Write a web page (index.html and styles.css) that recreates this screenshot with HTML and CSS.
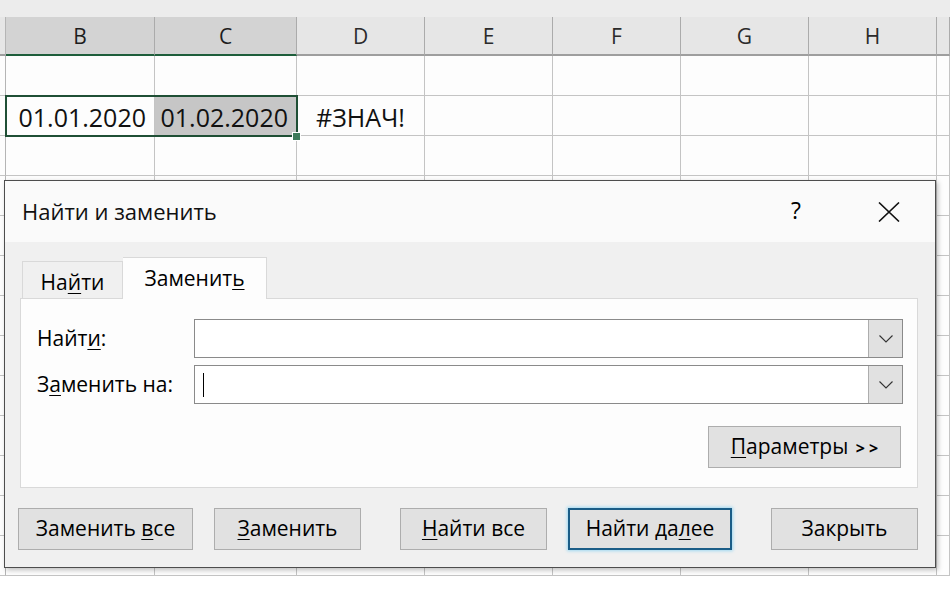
FILE: index.html
```html
<!DOCTYPE html>
<html lang="ru">
<head>
    <meta charset="UTF-8">
    <meta name="viewport" content="width=device-width, initial-scale=1.0">
    <title>Найти и заменить</title>
    <link rel="stylesheet" href="styles.css">
</head>
<body>

    <div class="sheet">
        <div class="top-strip"></div>
        <div class="grid">
            <div class="hdr stub"></div>
            <div class="hdr sel">B</div>
            <div class="hdr sel">C</div>
            <div class="hdr">D</div>
            <div class="hdr">E</div>
            <div class="hdr">F</div>
            <div class="hdr">G</div>
            <div class="hdr">H</div>
            <div class="hdr"></div>

            <div class="cell stub"></div><div class="cell"></div><div class="cell"></div><div class="cell"></div><div class="cell"></div><div class="cell"></div><div class="cell"></div><div class="cell"></div><div class="cell"></div>

            <div class="cell stub"></div>
            <div class="cell date">01.01.2020</div>
            <div class="cell date selected">01.02.2020</div>
            <div class="cell error">#ЗНАЧ!</div>
            <div class="cell"></div><div class="cell"></div><div class="cell"></div><div class="cell"></div><div class="cell"></div>

            <div class="cell stub"></div><div class="cell"></div><div class="cell"></div><div class="cell"></div><div class="cell"></div><div class="cell"></div><div class="cell"></div><div class="cell"></div><div class="cell"></div>
            <div class="cell stub"></div><div class="cell"></div><div class="cell"></div><div class="cell"></div><div class="cell"></div><div class="cell"></div><div class="cell"></div><div class="cell"></div><div class="cell"></div>
            <div class="cell stub"></div><div class="cell"></div><div class="cell"></div><div class="cell"></div><div class="cell"></div><div class="cell"></div><div class="cell"></div><div class="cell"></div><div class="cell"></div>
            <div class="cell stub"></div><div class="cell"></div><div class="cell"></div><div class="cell"></div><div class="cell"></div><div class="cell"></div><div class="cell"></div><div class="cell"></div><div class="cell"></div>
            <div class="cell stub"></div><div class="cell"></div><div class="cell"></div><div class="cell"></div><div class="cell"></div><div class="cell"></div><div class="cell"></div><div class="cell"></div><div class="cell"></div>
            <div class="cell stub"></div><div class="cell"></div><div class="cell"></div><div class="cell"></div><div class="cell"></div><div class="cell"></div><div class="cell"></div><div class="cell"></div><div class="cell"></div>
            <div class="cell stub"></div><div class="cell"></div><div class="cell"></div><div class="cell"></div><div class="cell"></div><div class="cell"></div><div class="cell"></div><div class="cell"></div><div class="cell"></div>
            <div class="cell stub"></div><div class="cell"></div><div class="cell"></div><div class="cell"></div><div class="cell"></div><div class="cell"></div><div class="cell"></div><div class="cell"></div><div class="cell"></div>
            <div class="cell stub"></div><div class="cell"></div><div class="cell"></div><div class="cell"></div><div class="cell"></div><div class="cell"></div><div class="cell"></div><div class="cell"></div><div class="cell"></div>
            <div class="cell stub"></div><div class="cell"></div><div class="cell"></div><div class="cell"></div><div class="cell"></div><div class="cell"></div><div class="cell"></div><div class="cell"></div><div class="cell"></div>
            <div class="cell stub"></div><div class="cell"></div><div class="cell"></div><div class="cell"></div><div class="cell"></div><div class="cell"></div><div class="cell"></div><div class="cell"></div><div class="cell"></div>
        </div>
        <div class="selection"></div>
        <div class="fill-handle"></div>
    </div>

    <div class="dialog">
        <div class="dialog-title">
            <span class="title-text">Найти и заменить</span>
            <span class="help">?</span>
            <svg class="close" width="22" height="20" viewBox="0 0 22 20">
                <path d="M1 0.5 L21 19.5 M21 0.5 L1 19.5" stroke="#111" stroke-width="1.6" fill="none"/>
            </svg>
        </div>

        <div class="dialog-body">
            <div class="tabs">
                <div class="tab">На<u>й</u>ти</div>
                <div class="tab active">Заменит<u>ь</u></div>
            </div>

            <div class="panel">
                <div class="fields">
                    <label>Найт<u>и</u>:</label>
                    <div class="combo">
                        <div class="combo-input"></div>
                        <div class="combo-btn">
                            <svg width="14" height="8" viewBox="0 0 14 8"><path d="M0.5 0.5 L7 7 L13.5 0.5" stroke="#333" stroke-width="1.1" fill="none"/></svg>
                        </div>
                    </div>

                    <label>З<u>а</u>менить на:</label>
                    <div class="combo">
                        <div class="combo-input"><span class="caret"></span></div>
                        <div class="combo-btn">
                            <svg width="14" height="8" viewBox="0 0 14 8"><path d="M0.5 0.5 L7 7 L13.5 0.5" stroke="#333" stroke-width="1.1" fill="none"/></svg>
                        </div>
                    </div>
                </div>

                <div class="params-row">
                    <button class="btn params"><u>П</u>араметры <b class="arrows">&gt; &gt;</b></button>
                </div>
            </div>

            <div class="actions">
                <button class="btn w175">Заменить <u>в</u>се</button>
                <button class="btn w147 gap-s"><u>З</u>аменить</button>
                <button class="btn w147 gap-l"><u>Н</u>айти все</button>
                <button class="btn w164 gap-s focused">Найти да<u>л</u>ее</button>
                <button class="btn w147 gap-l">Закрыть</button>
            </div>
        </div>
    </div>

</body>
</html>
```

FILE: styles.css
```css
body {
    margin: 0;
    width: 950px;
    height: 592px;
    overflow: hidden;
    background-color: #ffffff;
    font-family: "Open Sans", "Noto Sans", sans-serif;
    position: relative;
}
u {
    text-decoration-thickness: 1px;
    text-underline-offset: 3px;
}

/* ---- лист ---- */
.sheet {
    position: relative;
}
.top-strip {
    height: 17px;
    background-color: #ececec;
}
.grid {
    display: grid;
    grid-template-columns: 6px 149px 142px 128px 128px 128px 128px 128px 1fr;
    grid-template-rows: 39px;
    grid-auto-rows: 40px;
    background-color: #fdfdfd;
}
.hdr {
    background-color: #e6e6e6;
    border-right: 1px solid #ababab;
    border-bottom: 2px solid #9e9e9e;
    display: flex;
    align-items: center;
    justify-content: center;
    font-size: 21px;
    color: #2b2b2b;
    box-sizing: border-box;
}
.hdr.sel {
    background-color: #d3d3d3;
    border-bottom-color: #1e5e3b;
    color: #1d1d1d;
}
.cell {
    border-right: 1px solid #c4c4c4;
    border-bottom: 1px solid #c4c4c4;
    box-sizing: border-box;
    font-size: 25px;
    color: #111;
    display: flex;
    align-items: center;
    padding-top: 2px;
}
.stub {
    border-right-color: #b5b5b5;
}
.cell.date {
    justify-content: flex-end;
    padding-right: 8px;
}
.cell.selected {
    background-color: #c6c6c6;
}
.cell.error {
    justify-content: center;
}
.selection {
    position: absolute;
    left: 5px;
    top: 95px;
    width: 293px;
    height: 42px;
    border: 2px solid #1f4f35;
    box-sizing: border-box;
}
.fill-handle {
    position: absolute;
    left: 292px;
    top: 132px;
    width: 7px;
    height: 7px;
    background-color: #3d7a5a;
    border: 1px solid #ffffff;
}

/* ---- диалог ---- */
.dialog {
    position: absolute;
    left: 4px;
    top: 180px;
    width: 932px;
    height: 388px;
    box-sizing: border-box;
    border: 1px solid #4d4d4d;
    background-color: #f0f0f0;
    box-shadow: 2px 2px 5px rgba(0, 0, 0, 0.25);
    font-size: 21px;
    color: #000;
}
.dialog-title {
    height: 61px;
    background-color: #fafafa;
    display: flex;
    align-items: center;
    padding-left: 17px;
    padding-right: 35px;
}
.title-text {
    flex: 1;
    font-size: 22px;
    color: #111;
    padding-bottom: 2px;
}
.help {
    font-size: 23px;
    margin-right: 77px;
    padding-bottom: 3px;
}
.close {
    display: block;
}
.dialog-body {
    padding: 15px 17px 0 13px;
}
.tabs {
    display: flex;
    align-items: flex-end;
    height: 41px;
    margin-left: 4px;
    position: relative;
    z-index: 1;
}
.tab {
    width: 101px;
    height: 37px;
    box-sizing: border-box;
    border: 1px solid #d9d9d9;
    border-bottom: none;
    display: flex;
    align-items: center;
    justify-content: center;
    padding-top: 4px;
}
.tab.active {
    width: 144px;
    height: 42px;
    margin-bottom: -1px;
    background-color: #fdfdfd;
    border-left: none;
    padding-top: 0;
    padding-bottom: 2px;
}
.panel {
    margin-left: 2px;
    height: 190px;
    box-sizing: border-box;
    border: 1px solid #d9d9d9;
    background-color: #fdfdfd;
    padding: 20px 14px 0 16px;
}
.fields {
    display: grid;
    grid-template-columns: 157px 1fr;
    grid-auto-rows: 39px;
    row-gap: 7px;
    align-items: center;
}
label {
    padding-bottom: 2px;
}
.combo {
    display: flex;
    height: 39px;
    box-sizing: border-box;
    border: 1px solid #8a8a8a;
    background-color: #ffffff;
}
.combo-input {
    flex: 1;
    display: flex;
    align-items: center;
    padding-left: 8px;
}
.caret {
    width: 1px;
    height: 24px;
    background-color: #000;
}
.combo-btn {
    width: 33px;
    background-color: #e1e1e1;
    border-left: 1px solid #adadad;
    display: flex;
    align-items: center;
    justify-content: center;
}
.params-row {
    display: flex;
    justify-content: flex-end;
    margin-top: 22px;
    padding-right: 2px;
}
.btn {
    height: 42px;
    box-sizing: border-box;
    border: 1px solid #adadad;
    background-color: #e1e1e1;
    font-family: "Open Sans", "Noto Sans", sans-serif;
    font-size: 21px;
    color: #000;
    padding: 0 0 3px 0;
    cursor: pointer;
}
.btn.params {
    width: 193px;
}
.arrows {
    font-size: 16px;
    margin-left: 2px;
}
.actions {
    display: flex;
    margin-top: 20px;
}
.w175 { width: 175px; }
.w147 { width: 147px; }
.w164 { width: 164px; }
.gap-s { margin-left: 21px; }
.gap-l { margin-left: 39px; }
.btn.focused {
    border: 2px solid #1b5d87;
    box-shadow: 0 0 3px 1px #9fd8f2;
}
```
